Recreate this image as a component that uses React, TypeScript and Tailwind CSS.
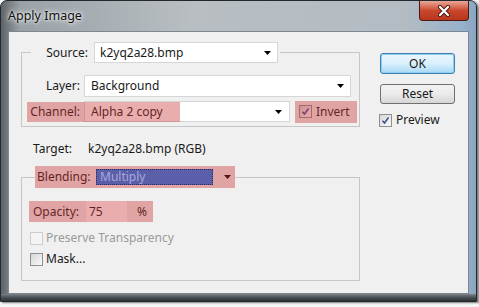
import React from "react";

function Arrow() {
  return (
    <svg width="7" height="4" viewBox="0 0 7 4" className="shrink-0">
      <path d="M0 0h7L3.5 4z" fill="#000" />
    </svg>
  );
}

function Combo({ value, className }: { value: string; className: string }) {
  return (
    <div
      className={`flex items-center justify-between bg-white border border-[#d6d6d6] pr-[6px] ${className}`}
    >
      <span className="leading-none">{value}</span>
      <Arrow />
    </div>
  );
}

function Check({ checked, disabled }: { checked?: boolean; disabled?: boolean }) {
  return (
    <span
      className={`flex items-center justify-center w-[13px] h-[13px] shrink-0 border ${
        disabled
          ? "border-[#cdcdcd] bg-[#f4f4f4]"
          : "border-[#8e8f8f] bg-gradient-to-br from-[#d6d6d6] to-[#fafafa]"
      }`}
    >
      {checked && (
        <svg width="9" height="9" viewBox="0 0 9 9">
          <path
            d="M1.5 4.8l2 2.2L7.6 1.4"
            fill="none"
            stroke="#3d4f8c"
            strokeWidth="1.6"
          />
        </svg>
      )}
    </span>
  );
}

// red annotation marker laid over the dialog
function Mark({ className }: { className: string }) {
  return (
    <span
      className={`pointer-events-none absolute bg-[#c83232]/40 ${className}`}
    ></span>
  );
}

export default function App() {
  return (
    <div
      className="w-[479px] h-[307px] bg-[#f7f7f7] text-[12px] text-[#1a1a1a] overflow-hidden"
      style={{ fontFamily: '"Noto Sans", "Open Sans", sans-serif' }}
    >
      <div className="flex flex-col w-[477px] h-[302px] rounded-t-[7px] border border-[#23282c] shadow-[2px_1px_2px_rgba(0,0,0,0.5)] bg-[linear-gradient(to_right,#5d6469,#9aa2a7_4%,#b8bec2_40%,#b3bcc3_85%,#97b1cb_97%,#8aa6c2)]">
        {/* title bar */}
        <div className="flex justify-between h-[30px] pl-[7px] pr-[7px]">
          <div className="pt-[6px] text-[12.5px] text-[#111] [text-shadow:0_0_6px_#fff,0_0_3px_#fff]">
            Apply Image
          </div>
          <div className="flex items-center justify-center w-[50px] h-[20px] rounded-b-[4px] border border-t-0 border-[#4a1a12] bg-gradient-to-b from-[#e7a795] via-[#c9472d] to-[#b9361e]">
            <svg width="14" height="12" viewBox="0 0 14 12">
              <path
                d="M3 2l8 8M11 2l-8 8"
                stroke="#4a1a12"
                strokeWidth="4"
                strokeLinecap="round"
              />
              <path
                d="M3 2l8 8M11 2l-8 8"
                stroke="#fff"
                strokeWidth="2.2"
                strokeLinecap="round"
              />
            </svg>
          </div>
        </div>

        {/* client area */}
        <div className="flex-1 px-[7px]">
          <div className="flex h-[263px] bg-[#f0f0f0] border border-[#7d8891]">
            {/* left column */}
            <div className="w-[351px] flex flex-col">
              <fieldset className="ml-[12px] mt-[10px] w-[339px] border border-[#c6c6c6] pb-[4px]">
                <legend className="ml-[9px] pr-[2px]">
                  <div className="flex items-center">
                    <span className="w-[57px] text-right">Source:</span>
                    <Combo
                      value="k2yq2a28.bmp"
                      className="ml-[6px] w-[184px] h-[21px] pl-[5px]"
                    />
                  </div>
                </legend>
                <div className="flex items-center mt-[12px] h-[22px]">
                  <span className="w-[58px] text-right">Layer:</span>
                  <Combo
                    value="Background"
                    className="ml-[4px] w-[267px] h-[22px] pl-[6px]"
                  />
                </div>
                <div className="relative flex items-center mt-[4px] h-[21px]">
                  <span className="w-[58px] text-right">Channel:</span>
                  <Combo
                    value="Alpha 2 copy"
                    className="ml-[4px] w-[206px] h-[21px] pl-[6px] pr-[7px]"
                  />
                  <Mark className="left-[5px] top-[1px] w-[153px] h-[20px]" />
                  <div className="relative flex items-center gap-[4px] ml-[5px] pl-[4px] w-[62px] h-[22px]">
                    <Check checked />
                    <span>Invert</span>
                    <Mark className="inset-0" />
                  </div>
                </div>
              </fieldset>

              <div className="flex items-center mt-[14px] ml-[24px] h-[16px]">
                <span className="w-[55px]">Target:</span>
                <span>k2yq2a28.bmp (RGB)</span>
              </div>

              <fieldset className="ml-[12px] mt-[9px] w-[339px] border border-[#c6c6c6] pb-[13px]">
                <legend className="ml-[13px]">
                  <div className="relative flex items-center h-[22px] pl-[2px] pr-[4px]">
                    <span className="w-[57px]">Blending:</span>
                    <span className="relative z-10 flex items-center ml-[2px] w-[117px] h-[16px] pl-[4px] bg-[#5b5fa9] text-[#aaa7dc] outline outline-1 outline-dotted outline-[#2c2c5c] -outline-offset-1">
                      Multiply
                    </span>
                    <span className="ml-[11px]">
                      <Arrow />
                    </span>
                    <Mark className="inset-0" />
                  </div>
                </legend>
                <div className="relative flex items-center mt-[13px] ml-[7px] w-[124px] h-[21px]">
                  <span className="w-[57px] pl-[4px]">Opacity:</span>
                  <span className="w-[41px] h-full flex items-center pl-[3px] bg-white">
                    75
                  </span>
                  <span className="ml-[10px]">%</span>
                  <Mark className="inset-0" />
                </div>
                <div className="flex items-center gap-[3px] mt-[8px] ml-[8px] h-[16px] text-[#9a9a9a]">
                  <Check disabled />
                  <span>Preserve Transparency</span>
                </div>
                <div className="flex items-center gap-[3px] mt-[5px] ml-[8px] h-[16px]">
                  <Check />
                  <span>Mask...</span>
                </div>
              </fieldset>
            </div>

            {/* right column */}
            <div className="flex flex-col pl-[20px]">
              <button className="mt-[21px] w-[75px] h-[21px] rounded-[3px] border border-[#3c7fb1] bg-gradient-to-b from-[#eaf6fd] via-[#d9f0fc] to-[#a7d9f5] shadow-[0_0_0_1px_#8ed0ee_inset]">
                OK
              </button>
              <button className="mt-[10px] w-[75px] h-[20px] rounded-[3px] border border-[#707070] bg-gradient-to-b from-[#f2f2f2] via-[#ebebeb] to-[#d5d5d5]">
                Reset
              </button>
              <div className="flex items-center gap-[4px] mt-[8px] -ml-px h-[16px]">
                <Check checked />
                <span>Preview</span>
              </div>
            </div>
          </div>
        </div>

        {/* bottom frame */}
        <div className="h-[7px] bg-gradient-to-b from-[#7b8388] via-[#4a5055] to-[#2c3135]"></div>
      </div>
    </div>
  );
}
